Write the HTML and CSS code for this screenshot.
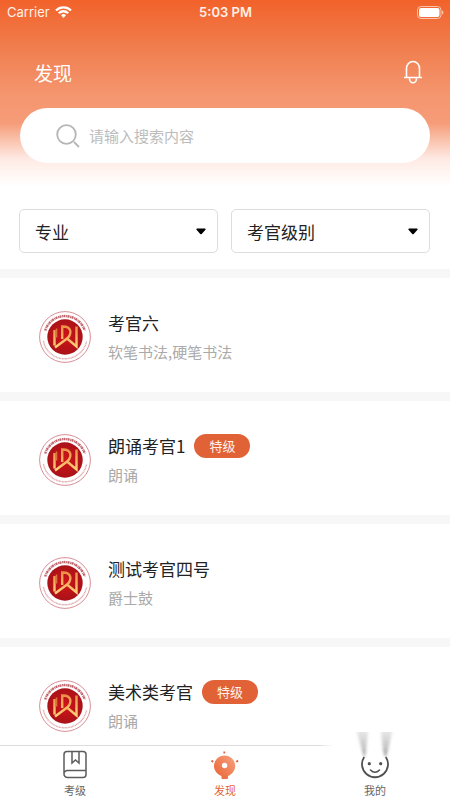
FILE: index.html
```html
<!DOCTYPE html>
<html lang="zh-CN">
<head>
    <meta charset="UTF-8">
    <meta name="viewport" content="width=device-width, initial-scale=1.0">
    <title>发现</title>
    <link rel="stylesheet" href="styles.css">
</head>
<body>
    <!-- Shared examiner logo -->
    <svg class="symbols" aria-hidden="true">
        <defs>
            <radialGradient id="seal">
                <stop offset="0" stop-color="#d01418"/>
                <stop offset="1" stop-color="#a91218"/>
            </radialGradient>
            <linearGradient id="gold" gradientUnits="userSpaceOnUse" x1="0" y1="15" x2="0" y2="37">
                <stop offset="0" stop-color="#ec8f48"/>
                <stop offset="1" stop-color="#ffd27c"/>
            </linearGradient>
        </defs>
        <symbol id="logo" viewBox="0 0 52 52">
            <circle cx="26" cy="26" r="25.4" fill="#fff" stroke="#d98f96" stroke-width="1"/>
            <path d="M6.2 19.5A20.8 20.8 0 0 1 45.8 19.5" fill="none" stroke="#c2646c" stroke-width="2.4" stroke-dasharray="2 .7 1 .4"/>
            <path d="M4.4 30A22 22 0 0 0 47.6 30" fill="none" stroke="#dfa4a8" stroke-width="1.4" stroke-dasharray="1 .5"/>
            <circle cx="26" cy="26" r="17.7" fill="url(#seal)"/>
            <g fill="none" stroke="url(#gold)" stroke-width="2.4">
                <path d="M15.500 19v15.500M23.200 28V15.500h1c8 0 9 6.500 4.500 11.500L16 36.500"/>
                <path d="M37.500 15.500v20L28 27.500"/>
            </g>
            <path d="M17.500 17.500v9" stroke="#d9743c" stroke-width="1.600"/>
        </symbol>
    </svg>

    <div class="app">
        <header class="header">
            <div class="status-bar">
                <div class="carrier">
                    <span>Carrier</span>
                    <svg width="17" height="12" viewBox="0 0 17 12" fill="none" stroke="#fff" stroke-width="2.300">
                        <path d="M1 4.500a10.600 10.600 0 0 1 15 0M3.800 7.200a6.700 6.700 0 0 1 9.400 0"/>
                        <path d="M8.500 12L6 9.300a3.600 3.600 0 0 1 5 0z" fill="#fff" stroke="none"/>
                    </svg>
                </div>
                <strong class="time">5:03 PM</strong>
                <svg class="battery" width="27" height="13" viewBox="0 0 27 13">
                    <rect x=".5" y=".5" width="23.500" height="12" rx="3.500" fill="none" stroke="#fbc3aa"/>
                    <rect x="2" y="2" width="20.500" height="9" rx="2" fill="#fff"/>
                    <path d="M25 4.500c2 .8 2 3.200 0 4z" fill="#fbc3aa"/>
                </svg>
            </div>
            <div class="title-bar">
                <h1>发现</h1>
                <button class="bell" type="button" aria-label="通知">
                    <svg width="20" height="24" viewBox="0 0 20 24" fill="none" stroke="#fff" stroke-width="1.600">
                        <path d="M1 17.500h18M3.500 17.500V8.500a6.500 7 0 0 1 13 0v9M6.500 18.500a3.500 4.300 0 0 0 7 0"/>
                    </svg>
                </button>
            </div>
            <label class="search">
                <svg width="24" height="24" viewBox="0 0 24 24" fill="none" stroke="#b5b5b5" stroke-width="1.800">
                    <circle cx="10.500" cy="10.500" r="9.300"/>
                    <path d="M18 18l5 5"/>
                </svg>
                <input type="text" placeholder="请输入搜索内容" aria-label="搜索">
            </label>
        </header>

        <div class="filters">
            <div class="filter">
                <select aria-label="专业">
                    <option>专业</option>
                </select>
                <svg width="10" height="7" viewBox="0 0 10 7"><path d="M1 .5h8q1 .3.500 1.300L5.700 6q-.7.700-1.400 0L.5 1.800Q0 .8 1 .5z"/></svg>
            </div>
            <div class="filter">
                <select aria-label="考官级别">
                    <option>考官级别</option>
                </select>
                <svg width="10" height="7" viewBox="0 0 10 7"><path d="M1 .5h8q1 .3.500 1.300L5.700 6q-.7.700-1.400 0L.5 1.800Q0 .8 1 .5z"/></svg>
            </div>
        </div>

        <main class="list">
            <article class="card">
                <svg class="logo"><use href="#logo"/></svg>
                <div class="info">
                    <h2>考官六</h2>
                    <p>软笔书法,硬笔书法</p>
                </div>
            </article>
            <article class="card">
                <svg class="logo"><use href="#logo"/></svg>
                <div class="info">
                    <h2>朗诵考官1 <span class="tag">特级</span></h2>
                    <p>朗诵</p>
                </div>
            </article>
            <article class="card">
                <svg class="logo"><use href="#logo"/></svg>
                <div class="info">
                    <h2>测试考官四号</h2>
                    <p>爵士鼓</p>
                </div>
            </article>
            <article class="card">
                <svg class="logo"><use href="#logo"/></svg>
                <div class="info">
                    <h2>美术类考官 <span class="tag">特级</span></h2>
                    <p>朗诵</p>
                </div>
            </article>
        </main>

        <nav class="tabs">
            <a href="#exam">
                <svg width="30" height="30" viewBox="0 0 30 30" fill="none" stroke="#5c5c5c" stroke-width="1.500">
                    <path d="M26 22V4.500a3 3 0 0 0-3-3H7a3 3 0 0 0-3 3V24M26 20.500H7.500a3.500 3.500 0 0 0 0 7H23a3 3 0 0 0 3-3v-4"/>
                    <path d="M12 1.500V13l3.500-3 3.500 3V1.500"/>
                </svg>
                <span>考级</span>
            </a>
            <a href="#discover" class="active">
                <svg width="30" height="30" viewBox="0 0 30 30">
                    <defs>
                        <linearGradient id="bulb" x1="1" y1="0" x2="0" y2="1">
                            <stop offset="0" stop-color="#f6a382"/>
                            <stop offset="1" stop-color="#e9602f"/>
                        </linearGradient>
                    </defs>
                    <path d="M11.500 26C7 24 4 20.500 4 16a10.600 10.600 0 0 1 21.200 0c0 4.500-3 8-7.200 10v2q0 1-1 1h-4.500q-1 0-1-1z" fill="url(#bulb)"/>
                    <circle cx="14.600" cy="15.500" r="2.700" fill="#fff"/>
                    <path d="M14.300 1.500v2M1.500 10.500l1.700 1.500M28 10.500L26.300 12" stroke="#df6540" stroke-width="1.800"/>
                </svg>
                <span>发现</span>
            </a>
            <a href="#mine">
                <svg class="face" width="30" height="30" viewBox="0 0 30 30" fill="none">
                    <defs>
                        <linearGradient id="trail" x1="0" y1="0" x2="0" y2="1">
                            <stop offset="0" stop-color="#999" stop-opacity=".25"/>
                            <stop offset=".6" stop-color="#888" stop-opacity=".5"/>
                            <stop offset="1" stop-color="#666" stop-opacity=".8"/>
                        </linearGradient>
                        <filter id="soften" x="-50%" y="-10%" width="200%" height="120%">
                            <feGaussianBlur stdDeviation="1.800 .3"/>
                        </filter>
                    </defs>
                    <g fill="url(#trail)" filter="url(#soften)">
                        <path d="M-3-18H8L6 0 4.500 8 2 0z"/>
                        <path d="M21-18h11L28 0l-2.500 8L23 0z"/>
                    </g>
                    <path d="M4.200 7a13 13 0 1 0 21.600 0" stroke="#505050" stroke-width="1.800"/>
                    <circle cx="9.300" cy="13.700" r="1.600" fill="#505050"/>
                    <circle cx="20.700" cy="13.700" r="1.600" fill="#505050"/>
                    <path d="M10.500 20q4.500 4.500 9 0" stroke="#505050" stroke-width="1.600" stroke-linecap="round"/>
                </svg>
                <span>我的</span>
            </a>
        </nav>
    </div>
</body>
</html>
```

FILE: styles.css
```css
* {
    box-sizing: border-box;
}
body {
    margin: 0;
    font-family: "Noto Sans CJK SC", sans-serif;
    background-color: white;
    color: #222;
}
h1, h2, p {
    margin: 0;
    font-weight: normal;
}
.symbols {
    display: block;
    width: 0;
    height: 0;
}
.app {
    display: flex;
    flex-direction: column;
    height: 100vh;
}

/* Header */
.header {
    flex: none;
    padding: 0 20px 26px;
    background: linear-gradient(#f2622a 0, #f07f50 50px, #f5966f 95px, #f59c78 123px, #fac4ae 141px, #fee8e2 158px, #fff5f1 172px, #fff 187px);
}
.status-bar {
    display: grid;
    grid-template-columns: 1fr auto 1fr;
    align-items: center;
    height: 24px;
    margin: 0 -14px 0 -13px;
    font-family: Inter, sans-serif;
    font-size: 13px;
    color: #fff0e8;
}
.carrier {
    display: flex;
    align-items: center;
    gap: 5px;
}
.time {
    font-weight: 600;
}
.battery {
    justify-self: end;
}
.title-bar {
    display: flex;
    align-items: center;
    justify-content: space-between;
    height: 84px;
    padding: 12px 7px 0 14px;
}
.title-bar h1 {
    font-size: 19px;
    color: white;
}
.bell {
    display: flex;
    padding: 0;
    border: none;
    background: none;
    cursor: pointer;
}
.search {
    display: flex;
    align-items: center;
    gap: 9px;
    height: 55px;
    padding: 0 36px;
    border-radius: 28px;
    background-color: white;
}
.search input {
    flex: 1;
    min-width: 0;
    padding: 0;
    border: none;
    outline: none;
    background: none;
    font-family: inherit;
    font-size: 15px;
}
.search input::placeholder {
    color: #bcbcbc;
}

/* Filters */
.filters {
    display: grid;
    grid-template-columns: 1fr 1fr;
    gap: 13px;
    flex: none;
    padding: 20px 20px 16px 19px;
}
.filter {
    display: grid;
    align-items: center;
}
.filter select, .filter svg {
    grid-area: 1 / 1;
}
.filter select {
    width: 100%;
    height: 44px;
    padding: 0 15px;
    border: 1px solid #ddd;
    border-radius: 5px;
    appearance: none;
    background-color: white;
    color: #222;
    font-family: inherit;
    font-size: 17px;
}
.filter svg {
    justify-self: end;
    margin-right: 12px;
    pointer-events: none;
}

/* Examiner list */
.list {
    flex: 1;
    min-height: 0;
    overflow: hidden;
}
.card {
    display: flex;
    align-items: center;
    gap: 17px;
    height: 123px;
    padding: 3px 20px 0 39px;
    border-top: 9px solid #f7f7f7;
}
.logo {
    flex: none;
    width: 52px;
    height: 52px;
}
.info h2 {
    display: flex;
    align-items: center;
    gap: 9px;
    height: 30px;
    font-size: 17px;
}
.info p {
    font-size: 15px;
    line-height: 28px;
    color: #aaa;
}
.tag {
    padding: 0 15px;
    border-radius: 12px;
    background-color: #e16236;
    color: #fff2eb;
    font-size: 13px;
    line-height: 24px;
}

/* Bottom tabs */
.tabs {
    display: grid;
    grid-template-columns: repeat(3, 1fr);
    flex: none;
    height: 54px;
    padding-top: 5px;
    background: linear-gradient(to right, #ddd 71%, transparent 74%) top / 100% 1px no-repeat;
}
.tabs a {
    display: flex;
    flex-direction: column;
    align-items: center;
    color: #666;
    font-size: 11px;
    line-height: 20px;
    text-decoration: none;
}
.tabs .active {
    color: #e16236;
}
.face {
    overflow: visible;
}
```
